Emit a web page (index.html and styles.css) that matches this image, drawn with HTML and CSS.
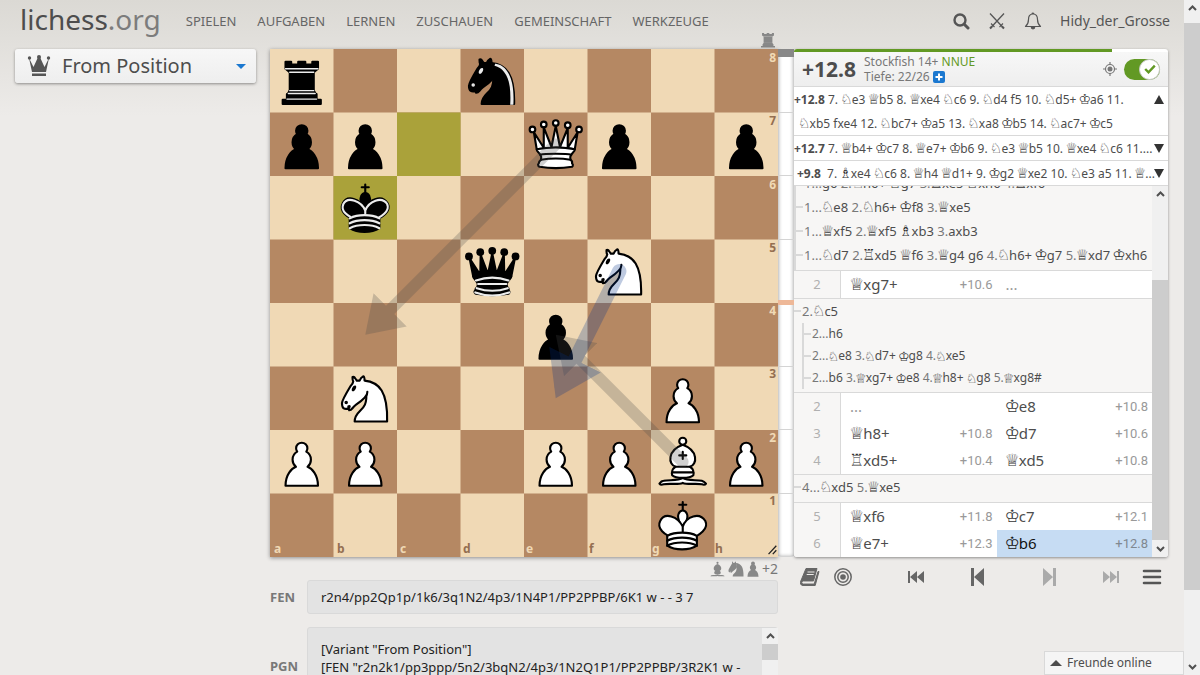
FILE: index.html
```html
<!DOCTYPE html>
<html lang="de">
<head>
<meta charset="utf-8">
<title>Analysebrett • lichess.org</title>
<meta name="viewport" content="width=device-width, initial-scale=1">
<link rel="stylesheet" href="styles.css">
</head>
<body>
<svg class="defs" aria-hidden="true">
  <defs>
    <path id="pawn" d="M22.5 9c-2.21 0-4 1.79-4 4 0 .89.29 1.71.78 2.38C17.33 16.5 16 18.59 16 21c0 2.03.94 3.84 2.41 5.03-3 1.06-7.41 5.55-7.41 13.47h23c0-7.92-4.41-12.41-7.41-13.47 1.47-1.19 2.41-3 2.41-5.03 0-2.41-1.33-4.5-3.28-5.62.49-.67.78-1.49.78-2.38 0-2.21-1.79-4-4-4z"/>
    <g id="knight">
      <path d="M22 10c10.5 1 16.5 8 16 29H15c0-9 10-6.5 8-21"/>
      <path d="M24 18c.38 2.91-5.55 7.37-8 9-3 2-2.82 4.34-5 4-1.042-.94 1.41-3.04 0-3-1 0 .19 1.23-1 2-1 0-4.003 1-4-4 0-2 6-12 6-12s1.89-1.9 2-3.5c-.73-.994-.5-2-.5-3 1-1 3 2.5 3 2.5h2s.78-1.992 2.5-3c1 0 1 3 1 3"/>
    </g>
    <path id="knight-eyes" d="M9.5 25.5a.5.5 0 1 1-1 0 .5.5 0 1 1 1 0zm5.433-9.75a.5 1.5 30 1 1-.866-.5.5 1.5 30 1 1 .866.5z"/>
    <g id="bishop">
      <path d="M9 36c3.39-.97 10.11.43 13.5-2 3.39 2.43 10.11 1.03 13.5 2 0 0 1.65.54 3 2-.68.97-1.65.99-3 .5-3.39-.97-10.11.46-13.5-1-3.39 1.46-10.11.03-13.5 1-1.354.49-2.323.47-3-.5 1.354-1.94 3-2 3-2z"/>
      <path d="M15 32c2.5 2.5 12.5 2.5 15 0 .5-1.5 0-2 0-2 0-2.5-2.5-4-2.5-4 5.5-1.5 6-11.5-5-15.5-11 4-10.5 14-5 15.5 0 0-2.5 1.5-2.5 4 0 0-.5.5 0 2z"/>
      <path d="M25 8a2.5 2.5 0 1 1-5 0 2.5 2.5 0 1 1 5 0z"/>
    </g>
    <g id="rook">
      <path d="M9 39h27v-3H9v3zm3.5-7l1.5-2.5h17l1.5 2.5h-20zm-.5 4v-4h21v4H12z"/>
      <path d="M14 29.5v-13h17v13H14z"/>
      <path d="M14 16.5L11 14h23l-3 2.5H14zM11 14V9h4v2h5V9h5v2h5V9h4v5H11z"/>
    </g>
    <g id="king">
      <path d="M22.5 11.63V6M20 8h5"/>
      <path d="M22.5 25s4.5-7.5 3-10.5c0 0-1-2.5-3-2.5s-3 2.5-3 2.5c-1.5 3 3 10.5 3 10.5"/>
      <path d="M11.5 37c5.5 3.5 15.5 3.5 21 0v-7s9-4.5 6-10.5c-4-6.5-13.5-3.5-16 4V27v-3.5c-3.5-7.5-13-10.5-16-4-3 6 5 10 5 10V37z"/>
    </g>
    <path id="king-bands" d="M11.5 30c5.5-3 15.5-3 21 0m-21 3.5c5.5-3 15.5-3 21 0m-21 3.5c5.5-3 15.5-3 21 0"/>
    <path id="queen-base" d="M9 26c0 2 1.5 2 2.5 4 1 1.5 1 1 .5 3.5-1.5 1-1.5 2.5-1.5 2.5-1.5 1.5.5 2.5.5 2.5 6.5 1 16.5 1 23 0 0 0 1.5-1 0-2.5 0 0 .5-1.5-1-2.5-.5-2.5-.5-2 .5-3.5 1-2 2.5-2 2.5-4-8.5-1.5-18.5-1.5-27 0z"/>
    <path id="chevron" d="M1 5 L4.500 1.500 L8 5"/>
    <pattern id="squares" width="90" height="90" patternUnits="userSpaceOnUse">
      <rect width="90" height="90" fill="#f0d9b5"/>
      <path d="M45 0h45v45H45zM0 45h45v45H0z" fill="#b58863"/>
    </pattern>
    <marker id="head-grey" orient="auto" markerWidth="4" markerHeight="4" refX="2.05" refY="2"><path d="M0 0V4L3 2Z" fill="#4a4a4a"/></marker>
    <marker id="head-blue" orient="auto" markerWidth="4" markerHeight="4" refX="2.05" refY="2"><path d="M0 0V4L3 2Z" fill="#003088"/></marker>
  </defs>
</svg>

<div class="page">
  <header class="top">
    <a class="logo" href="#">lichess<span>.org</span></a>
    <nav class="nav">
      <a href="#">SPIELEN</a><a href="#">AUFGABEN</a><a href="#">LERNEN</a><a href="#">ZUSCHAUEN</a><a href="#">GEMEINSCHAFT</a><a href="#">WERKZEUGE</a>
    </nav>
    <div class="account">
      <button class="icon-btn" aria-label="Suche"><svg width="18" height="18" viewBox="0 0 18 18" fill="none" stroke="#555"><circle cx="8" cy="8" r="5.500" stroke-width="2.400"/><path d="M12.500 12.500 16 16" stroke-width="3" stroke-linecap="round"/></svg></button>
      <button class="icon-btn" aria-label="Herausforderungen"><svg width="18" height="18" viewBox="0 0 18 18" fill="none" stroke="#555" stroke-width="1.300"><path d="M2 1.500 15.500 16M16 1.500 2.500 16"/><path d="M3 11.500l3.500 3.500M15 11.500 11.500 15" stroke-width="1.100"/><path d="M2 16.500l2-2M16 16.500l-2-2" stroke-width="2"/></svg></button>
      <button class="icon-btn" aria-label="Benachrichtigungen"><svg width="18" height="18" viewBox="0 0 18 18" fill="none" stroke="#555" stroke-width="1.200" stroke-linejoin="round"><path d="M9 2c-3.500 0-4.500 2.500-4.500 5.500 0 3.500-.8 5-3 7h15c-2.200-2-3-3.500-3-7C13.500 4.500 12.500 2 9 2zM8 2a1 1 0 0 1 2 0"/><path d="M7.300 15c0 2.500 3.400 2.500 3.400 0z" fill="#555"/></svg></button>
      <a class="user" href="#">Hidy_der_Grosse</a>
    </div>
  </header>

  <main class="analyse">
    <aside class="side">
      <button class="variant">
        <svg width="24" height="24" viewBox="0 0 24 24" fill="#555"><circle cx="2.500" cy="4" r="1.700"/><circle cx="12" cy="3" r="2"/><circle cx="21.500" cy="4" r="1.700"/><path d="M2 4 5 18h14l3-14-4.500 9L12.900 3h-1.800L6.500 13zM5 19.500h14V22H5z"/></svg>
        <span>From Position</span>
        <svg class="caret" width="10" height="5" viewBox="0 0 10 5"><path d="M0 0h10L5 5z" fill="#1b78d0"/></svg>
      </button>
    </aside>

    <section class="board-col">
      <div class="material material-top">
        <svg width="14" height="16" viewBox="9 7 27 33" preserveAspectRatio="none" fill="#888"><use href="#rook"/></svg>
      </div>
      <div class="board">
        <svg viewBox="0 0 360 360" class="pieces" role="img" aria-label="Schachbrett">
          <rect width="360" height="360" fill="url(#squares)"/>
          <path d="M90 45h45v45H90zM45 90h45v45H45z" fill="#aaa23a"/>
          <g class="black">
            <g><use href="#rook"/><path class="shine thin" d="M12 35.500h21m-20-4h19m-18-2h17m-17-13h17M11 14h23"/></g>
            <g transform="translate(135 0)"><use href="#knight"/><use href="#knight-eyes" fill="#ececec" stroke="#ececec"/><path d="M24.550 10.400l-.45 1.450.5.150c3.150 1 5.650 2.490 7.900 6.750S35.750 29.060 35.250 39l-.05.5h2.250l.05-.5c.5-10.060-.88-16.850-3.250-21.340-2.370-4.490-5.790-6.640-9.190-7.160l-.51-.1z" fill="#ececec" stroke="none"/></g>
            <use href="#pawn" x="0" y="45"/><use href="#pawn" x="45" y="45"/><use href="#pawn" x="225" y="45"/><use href="#pawn" x="315" y="45"/><use href="#pawn" x="180" y="180"/>
            <g transform="translate(45 90)"><use href="#king"/><path class="shine" d="M32 29.500s8.500-4 6.030-9.650C34.150 14 25 18 22.500 24.500l.01 2.100-.01-2.100C20 18 9.906 14 6.997 19.850c-2.497 5.650 4.853 9 4.853 9"/><use class="shine" href="#king-bands"/></g>
            <g transform="translate(135 135)"><g stroke="none"><circle cx="6" cy="12" r="2.750"/><circle cx="14" cy="9" r="2.750"/><circle cx="22.500" cy="8" r="2.750"/><circle cx="31" cy="9" r="2.750"/><circle cx="39" cy="12" r="2.750"/></g><path d="M9 26c8.500-1.500 21-1.500 27 0l2.500-12.500L31 25l-.3-14.100-5.200 13.600-3-14.500-3 14.500-5.200-13.600L14 25 6.500 13.500 9 26z"/><use href="#queen-base"/><path class="shine" d="M11 29a35 35 1 0 1 23 0m-21.500 2.500h20m-21 3a35 35 1 0 0 22 0m-23 3a35 35 1 0 0 24 0"/></g>
          </g>
          <g class="white">
            <g transform="translate(180 45)"><path d="M8 12a2 2 0 1 1-4 0 2 2 0 1 1 4 0zm16.500-4.500a2 2 0 1 1-4 0 2 2 0 1 1 4 0zM41 12a2 2 0 1 1-4 0 2 2 0 1 1 4 0zM16 8.500a2 2 0 1 1-4 0 2 2 0 1 1 4 0zM33 9a2 2 0 1 1-4 0 2 2 0 1 1 4 0z"/><path d="M9 26c8.500-1.500 21-1.500 27 0l2-12-7 11V11l-5.500 13.500-3-15-3 15-5.500-14V25L7 14l2 12z"/><use href="#queen-base"/><path d="M11.500 30c3.500-1 18.500-1 22 0M12 33.500c6-1 15-1 21 0" fill="none"/></g>
            <g transform="translate(225 135)"><use href="#knight"/><use href="#knight-eyes" fill="#000"/></g>
            <g transform="translate(45 225)"><use href="#knight"/><use href="#knight-eyes" fill="#000"/></g>
            <use href="#pawn" x="270" y="225"/><use href="#pawn" x="0" y="270"/><use href="#pawn" x="45" y="270"/><use href="#pawn" x="180" y="270"/><use href="#pawn" x="225" y="270"/><use href="#pawn" x="315" y="270"/>
            <g transform="translate(270 270)"><use href="#bishop"/><path d="M17.500 26h10M15 30h15m-7.500-14.500v5M20 18h5"/></g>
            <g transform="translate(270 315)"><use href="#king"/><use href="#king-bands"/></g>
          </g>
          <g class="arrows">
            <path d="M202.500 67.500 73.100 196.900" stroke="#4a4a4a" stroke-width="8.300" marker-end="url(#head-grey)"/>
            <path d="M292.500 292.500 208.100 208.100" stroke="#4a4a4a" stroke-width="8.300" marker-end="url(#head-grey)"/>
            <path d="M247.500 157.500 206.800 238.900" stroke="#003088" stroke-width="10.200" marker-end="url(#head-blue)"/>
          </g>
          <path d="M353.300 358l5.500-6M356.300 358l2.500-2.800" stroke="#222" stroke-width=".9"/>
        </svg>
        <div class="ranks"><span>8</span><span>7</span><span>6</span><span>5</span><span>4</span><span>3</span><span>2</span><span>1</span></div>
        <div class="files"><span>a</span><span>b</span><span>c</span><span>d</span><span>e</span><span>f</span><span>g</span><span>h</span></div>
      </div>
      <div class="material">
        <svg width="15" height="16" viewBox="5 4 35 36" preserveAspectRatio="none" fill="#888"><use href="#bishop"/></svg>
        <svg width="16" height="16" viewBox="5 6 34 34" preserveAspectRatio="none" fill="#888"><use href="#knight"/></svg>
        <svg width="12" height="16" viewBox="10 8 25 32" preserveAspectRatio="none" fill="#888"><use href="#pawn"/></svg>
        <span>+2</span>
      </div>
      <div class="field">
        <label for="fen">FEN</label>
        <input id="fen" class="copyable" value="r2n4/pp2Qp1p/1k6/3q1N2/4p3/1N4P1/PP2PPBP/6K1 w - - 3 7">
      </div>
      <div class="field pgn">
        <label for="pgn">PGN</label>
        <div class="pgn-box">
          <textarea id="pgn" class="copyable">[Variant "From Position"]
[FEN "r2n2k1/pp3ppp/5n2/3bqN2/4p3/1N2Q1P1/PP2PPBP/3R2K1 w -
- 0 1"]</textarea>
          <div class="bar"><svg class="up" viewBox="0 0 9 6"><use href="#chevron"/></svg><div class="thumb pgn-thumb"></div></div>
        </div>
      </div>
    </section>

    <div class="gauge"><div class="gauge-black"></div><div class="ticks"><span></span><span></span><span></span><span></span><span></span><span></span><span></span><span></span></div><div class="zero"></div></div>

    <section class="tools-col">
      <div class="tools">
        <div class="progress"><span></span></div>
        <div class="ceval">
          <strong class="eval">+12.8</strong>
          <div class="engine">
            <div>Stockfish 14+ <span class="nnue">NNUE</span></div>
            <div>Tiefe: 22/26 <button class="deeper" aria-label="Tiefer analysieren"><svg width="12" height="12" viewBox="0 0 12 12"><rect width="12" height="12" rx="2" fill="#1b78d0"/><path d="M6 2.500v7M2.500 6h7" stroke="#fff" stroke-width="2"/></svg></button></div>
          </div>
          <button class="threat" aria-label="Drohung zeigen"><svg width="14" height="14" viewBox="0 0 14 14" fill="none" stroke="#777"><circle cx="7" cy="7" r="4.500" stroke-width="1.200"/><circle cx="7" cy="7" r="2.500" fill="#777" stroke="none"/><path d="M7 0v3M7 11v3M0 7h3M11 7h3" stroke-width="1.200"/></svg></button>
          <label class="switch"><input type="checkbox" checked aria-label="Engine"><span class="knob"><svg width="12" height="10" viewBox="0 0 12 10"><path d="M1.200 5 4.500 8.300 10.800 1.600" fill="none" stroke="#629924" stroke-width="2.400"/></svg></span></label>
        </div>
        <div class="pv open"><p><b>+12.8</b> 7. <i>♘</i>e3 <i>♕</i>b5 8. <i>♕</i>xe4 <i>♘</i>c6 9. <i>♘</i>d4 f5 10. <i>♘</i>d5+ <i>♔</i>a6 11.<br><span class="wrap"><i>♘</i>xb5 fxe4 12. <i>♘</i>bc7+ <i>♔</i>a5 13. <i>♘</i>xa8 <i>♔</i>b5 14. <i>♘</i>ac7+ <i>♔</i>c5</span></p><button class="fold up-tri" aria-label="Einklappen"></button></div>
        <div class="pv"><p><b>+12.7</b> 7. <i>♕</i>b4+ <i>♔</i>c7 8. <i>♕</i>e7+ <i>♔</i>b6 9. <i>♘</i>e3 <i>♕</i>b5 10. <i>♕</i>xe4 <i>♘</i>c6 11....</p><button class="fold" aria-label="Ausklappen"></button></div>
        <div class="pv"><p><b class="short">+9.8</b> 7. <i>♗</i>xe4 <i>♘</i>c6 8. <i>♕</i>h4 <i>♕</i>d1+ 9. <i>♔</i>g2 <i>♕</i>xe2 10. <i>♘</i>e3 a5 11. <i>♕</i>...</p><button class="fold" aria-label="Ausklappen"></button></div>
        <div class="moves-wrap">
          <div class="moves">
            <div class="vars first">
              <p><u>1...</u>g6 <u>2.</u><i>♘</i>h6+ <i>♔</i>g7 <u>3.</u><i>♖</i>xe5 <i>♔</i>xh6 <u>4.</u><i>♖</i>xf6</p>
              <p><u>1...</u><i>♘</i>e8 <u>2.</u><i>♘</i>h6+ <i>♔</i>f8 <u>3.</u><i>♕</i>xe5</p>
              <p><u>1...</u><i>♕</i>xf5 <u>2.</u><i>♕</i>xf5 <i>♗</i>xb3 <u>3.</u>axb3</p>
              <p><u>1...</u><i>♘</i>d7 <u>2.</u><i>♖</i>xd5 <i>♕</i>f6 <u>3.</u><i>♕</i>g4 g6 <u>4.</u><i>♘</i>h6+ <i>♔</i>g7 <u>5.</u><i>♕</i>xd7 <i>♔</i>xh6</p>
            </div>
            <div class="row"><span class="num">2</span><span class="move"><span><i>♕</i>xg7+</span><em>+10.6</em></span><span class="move dots">...</span></div>
            <div class="vars">
              <p><u>2.</u><i>♘</i>c5</p>
              <div class="nested">
                <p><u>2...</u>h6</p>
                <p><u>2...</u><i>♘</i>e8 <u>3.</u><i>♘</i>d7+ <i>♔</i>g8 <u>4.</u><i>♘</i>xe5</p>
                <p><u>2...</u>b6 <u>3.</u><i>♕</i>xg7+ <i>♔</i>e8 <u>4.</u><i>♕</i>h8+ <i>♘</i>g8 <u>5.</u><i>♕</i>xg8#</p>
              </div>
            </div>
            <div class="row"><span class="num">2</span><span class="move dots">...</span><span class="move"><span><i>♔</i>e8</span><em>+10.8</em></span></div>
            <div class="row"><span class="num">3</span><span class="move"><span><i>♕</i>h8+</span><em>+10.8</em></span><span class="move"><span><i>♔</i>d7</span><em>+10.6</em></span></div>
            <div class="row"><span class="num">4</span><span class="move"><span><i>♖</i>xd5+</span><em>+10.4</em></span><span class="move"><span><i>♕</i>xd5</span><em>+10.8</em></span></div>
            <div class="vars single"><p><u>4...</u><i>♘</i>xd5 <u>5.</u><i>♕</i>xe5</p></div>
            <div class="row"><span class="num">5</span><span class="move"><span><i>♕</i>xf6</span><em>+11.8</em></span><span class="move"><span><i>♔</i>c7</span><em>+12.1</em></span></div>
            <div class="row"><span class="num">6</span><span class="move"><span><i>♕</i>e7+</span><em>+12.3</em></span><span class="move active"><span><i>♔</i>b6</span><em>+12.8</em></span></div>
          </div>
          <div class="bar"><svg class="up" viewBox="0 0 9 6"><use href="#chevron"/></svg><div class="track"></div><div class="thumb moves-thumb"></div><svg class="down" viewBox="0 0 9 6"><use href="#chevron"/></svg></div>
        </div>
      </div>
      <div class="controls">
        <button aria-label="Eröffnungsbuch"><svg width="20" height="18" viewBox="0 0 20 18"><path d="M6 .5h11L13.500 13H3.200C1.300 13 1.300 16 3.200 16h11L18 3.500h1L15.200 17.500H3C.5 17.500 0 15 .8 13z" fill="#666" stroke="#666" stroke-linejoin="round"/><path d="M7.500 4h7M6.700 6.500h7" stroke="#edebe9"/><path d="M3 14.500h11" stroke="#edebe9" stroke-width="1.200"/></svg></button>
        <button aria-label="Übung"><svg width="18" height="18" viewBox="0 0 18 18" fill="none" stroke="#666" stroke-width="1.500"><circle cx="9" cy="9" r="8.200"/><circle cx="9" cy="9" r="5.200"/><circle cx="9" cy="9" r="2.800" fill="#666" stroke="none"/></svg></button>
        <span class="jumps">
          <button aria-label="Erster Zug"><svg width="16" height="12" viewBox="0 0 16 12" fill="#666"><path d="M0 0h2v12H0zM2 6l7-6v12zM9 6l7-6v12z"/></svg></button>
          <button class="prev" aria-label="Zurück"><svg width="13" height="18" viewBox="0 0 13 18" fill="#666"><path d="M0 0h3v18H0zM3 9l10-9v18z"/></svg></button>
          <button aria-label="Weiter" disabled><svg width="13" height="18" viewBox="0 0 13 18" fill="#aaa"><path d="M10 0h3v18h-3zM10 9 0 0v18z"/></svg></button>
          <button aria-label="Letzter Zug" disabled><svg width="16" height="12" viewBox="0 0 16 12" fill="#aaa"><path d="M14 0h2v12h-2zM14 6 7 0v12zM7 6 0 0v12z"/></svg></button>
        </span>
        <button aria-label="Menü"><svg width="20" height="16" viewBox="0 0 20 16"><path d="M2 2h16M2 8h16M2 14h16" stroke="#555" stroke-width="2.600" stroke-linecap="round"/></svg></button>
      </div>
    </section>
  </main>
  <button class="friends"><span class="tri"></span>Freunde online</button>
</div>

<div class="bar page-bar"><svg class="up" viewBox="0 0 9 6"><use href="#chevron"/></svg><div class="thumb page-thumb"></div><svg class="down" viewBox="0 0 9 6"><use href="#chevron"/></svg></div>
</body>
</html>
```
FILE: styles.css
```css
* { box-sizing: border-box; }
body {
  margin: 0;
  height: 100vh;
  overflow: hidden;
  display: flex;
  font: 14px/20px "Noto Sans", "DejaVu Sans", sans-serif;
  color: #4d4d4d;
  background: #edebe9 linear-gradient(to bottom, #dbd9d4, #edebe9 116px) no-repeat;
}
p { margin: 0; }
a { color: inherit; text-decoration: none; }
button { font: inherit; color: inherit; background: none; border: 0; padding: 0; }
svg { display: block; }
.defs { position: absolute; width: 0; height: 0; }
.page { flex: 1; min-width: 0; }

/* header */
.top { display: flex; align-items: center; height: 42px; padding: 0 14px 0 20px; }
.logo { font-size: 28px; line-height: 38px; padding-bottom: 4px; }
.logo span { color: #7c7c7c; }
.nav { display: flex; gap: 21px; margin-left: 25px; font-size: 13px; color: #666; }
.account { display: flex; align-items: center; gap: 18px; margin-left: auto; color: #555; }
.icon-btn { display: flex; }

/* layout */
.analyse {
  display: grid;
  grid-template-columns: 255px minmax(0, 508px) 16px minmax(0, 1fr);
  padding: 7px 16px 0 15px;
  align-items: start;
}
.side { padding-right: 14px; }
.board-col { position: relative; }
.variant {
  display: flex;
  align-items: center;
  gap: 11px;
  width: 100%;
  height: 34px;
  padding: 0 10px 0 12px;
  font-size: 20px;
  text-align: left;
  background: linear-gradient(#f7f7f7, #eee);
  border-radius: 3px;
  box-shadow: 0 1px 3px rgba(0, 0, 0, .4);
}
.caret { margin-left: auto; }

/* board */
.board { position: relative; box-shadow: 0 1px 4px rgba(0, 0, 0, .4); }
.pieces { width: 100%; }
.black, .white { stroke: #000; stroke-width: 1.5; stroke-linejoin: round; stroke-linecap: round; }
.black { fill: #000; }
.white { fill: #fff; }
.shine { stroke: #ececec; fill: none; }
.thin { stroke-width: 1; }
.arrows { fill: none; stroke-linecap: round; }
.arrows path { opacity: .25; }
.ranks, .files {
  position: absolute;
  display: grid;
  font-size: 12px;
  line-height: 14px;
  font-weight: bold;
  color: #f0d9b5;
}
.ranks { inset: 0 2px 0 auto; grid-template-rows: repeat(8, 1fr); padding-top: 2px; }
.files { inset: auto 0 1px 0; grid-template-columns: repeat(8, 1fr); padding-left: 4px; }
.ranks span:nth-child(even), .files span:nth-child(even) { color: #946f51; }
.material { display: flex; justify-content: flex-end; align-items: center; gap: 3px; height: 23px; color: #777; }
.material-top { position: absolute; right: 3px; top: -21px; }

/* FEN and PGN */
.field { display: grid; grid-template-columns: 37px minmax(0, 1fr); align-items: center; font-weight: bold; font-size: 13px; color: #787878; }
.copyable {
  width: 100%;
  display: block;
  margin: 0;
  border: 1px solid #d9d9d9;
  border-radius: 3px;
  background: #e3e3e3;
  color: #222;
  font: 13px/18px "Noto Sans", sans-serif;
  padding: 7px 13px;
}
input.copyable { height: 34px; }
textarea.copyable { height: 78px; padding-top: 12px; resize: none; overflow: hidden; }
.pgn { margin-top: 13px; }
.pgn-box { position: relative; }
.pgn-box .bar { position: absolute; inset: 1px 0 1px auto; }

/* scrollbars */
.bar { display: flex; flex-direction: column; width: 16px; background: #f0f0f0; flex: none; }
.bar svg { width: 9px; height: 6px; margin: 5px auto; flex: none; fill: none; stroke: #505050; stroke-width: 2; }
.bar .down { transform: rotate(180deg); margin-top: auto; }
.thumb { background: #cdcdcd; }
.pgn-thumb { height: 16px; }
.page-bar .up { margin-bottom: 12px; }
.page-thumb { flex: 0 0 84%; }
.track { flex: 0 0 21%; }
.moves-thumb { flex: 0 0 70%; }

/* gauge */
.gauge { position: relative; aspect-ratio: 16 / 508; background: #fff; box-shadow: inset 0 0 4px #888; }
.gauge-black { height: 8px; background: #888; }
.ticks { position: absolute; inset: 0; display: grid; grid-template-rows: repeat(8, 1fr); }
.ticks span { border-bottom: 1px solid #d4d4d4; }
.zero { position: absolute; left: 0; right: 0; top: 49.5%; height: 5px; background: #eeb898; }

/* tools */
.tools { display: flex; flex-direction: column; height: 508px; background: #fff; border-radius: 3px; overflow: hidden; box-shadow: 0 1px 3px rgba(0, 0, 0, .4); }
.progress { flex: none; height: 3px; }
.progress span { display: block; width: 85%; height: 100%; background: #629924; }
.ceval { display: flex; align-items: center; flex: none; height: 35px; padding: 0 8px; background: linear-gradient(#f7f7f7, #eee); border-bottom: 1px solid #d9d9d9; }
.eval { font-size: 21px; width: 62px; }
.engine { font-size: 12px; line-height: 15px; color: #787878; }
.nnue { color: #629924; }
.deeper { display: inline-block; vertical-align: -2px; }
.threat { margin-left: auto; margin-right: 7px; }
.switch { position: relative; width: 36px; height: 21px; border-radius: 11px; background: #629924; }
.switch input { appearance: none; position: absolute; inset: 0; margin: 0; }
.knob { position: absolute; right: 0; top: 0; width: 21px; height: 21px; border: 1px solid #ccc; border-radius: 50%; background: #fff; display: grid; place-items: center; }
.pv { display: flex; flex: none; height: 25px; padding-top: 1px; border-bottom: 1px solid #d9d9d9; font-size: 12px; line-height: 24px; white-space: nowrap; }
.pv p { flex: 1; min-width: 0; }
.pv.open { height: 49px; }
.wrap { padding-left: 5px; }
.short { padding: 0 3px; }
i { font-style: normal; font-family: "DejaVu Sans", sans-serif; font-size: 14px; line-height: 1; margin: 0 -1px; color: #333; }
.fold { align-self: flex-start; margin: 7px 4px 0 0; border: solid transparent; border-width: 9px 5px 0; border-top-color: #333; }
.up-tri { border-width: 0 5px 9px; border-bottom-color: #333; }
.moves-wrap { flex: 1; min-height: 0; display: flex; }
.moves { flex: 1; min-width: 0; display: flex; flex-direction: column; justify-content: flex-end; overflow: hidden; }
.row { display: grid; flex: none; grid-template-columns: 47px 1fr 1fr; height: 27px; line-height: 27px; }
.num { text-align: center; background: #f7f6f5; border-right: 1px solid #d9d9d9; color: #b0b0b0; font-size: 13px; }
.move { display: flex; justify-content: space-between; padding: 0 4px 0 9px; font-size: 15px; }
.move i { font-size: 17px; }
.move em { font: normal 13px/27px Roboto, sans-serif; color: #999; }
.dots { color: #999; }
.active, .active i { color: #111; }
.active { background: #c6dcf3; }
.active em { color: #808890; }
.vars { flex: none; background: #f7f6f5; border: solid #d9d9d9; border-width: 1px 0; padding-bottom: 3px; font-size: 13px; line-height: 24px; white-space: nowrap; }
.vars p { display: flex; align-items: center; white-space: pre; }
.vars i { font-size: 15px; }
.vars p::before { content: ""; width: 7px; height: 2px; margin-right: 1px; background: #d9d9d9; }
.vars u { text-decoration: none; color: #787878; }
.first { border-left: 2px solid #d9d9d9; }
.nested { border-left: 2px solid #d9d9d9; margin-left: 8px; font-size: 12px; line-height: 22px; }
.nested i { font-size: 13px; }

/* controls */
.controls { display: flex; align-items: center; gap: 14px; height: 39px; padding: 0 6px; }
.jumps { flex: 1; display: flex; justify-content: space-between; padding: 0 9px 0 42px; }
.jumps button { display: grid; align-items: center; }
.jumps .prev { margin-right: 12px; }
.friends {
  position: fixed;
  right: 16px;
  bottom: 0;
  display: flex;
  align-items: center;
  gap: 5px;
  width: 140px;
  height: 24px;
  padding-left: 5px;
  font-size: 12px;
  background: #f5f5f5;
  border: 1px solid #d9d9d9;
}
.tri { border: solid transparent; border-width: 0 6px 6px; border-bottom-color: #4d4d4d; }
```
